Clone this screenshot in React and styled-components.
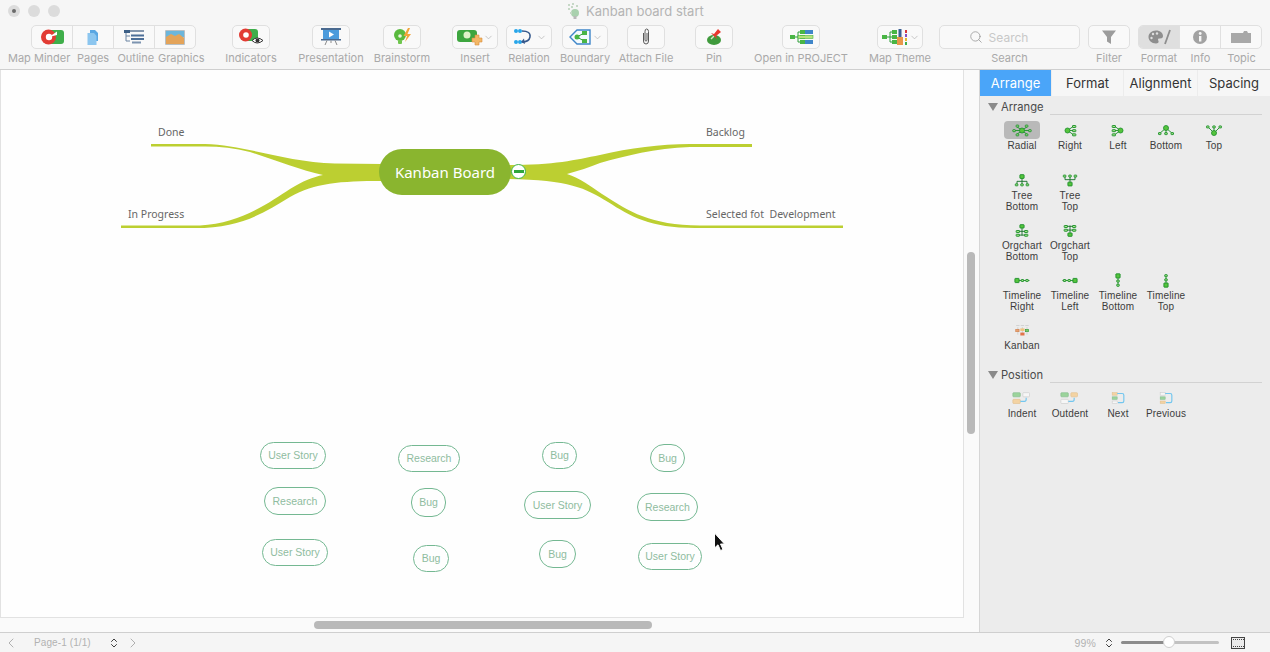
import styled, { createGlobalStyle } from "styled-components";
import { Search, ChevronDown, ChevronLeft, ChevronRight, ChevronsUpDown } from "lucide-react";

const GlobalStyle = createGlobalStyle`
  html, body {
    margin: 0;
    padding: 0;
    overflow: hidden;
  }
  * {
    box-sizing: border-box;
  }
`;

const Window = styled.div`
  width: 1270px;
  height: 652px;
  display: flex;
  flex-direction: column;
  background: #f6f6f6;
  font-family: "Liberation Sans", Arial, sans-serif;
  overflow: hidden;
`;

const TitleBar = styled.div`
  height: 25px;
  flex: none;
  display: flex;
  align-items: center;
  padding: 0 0 3px 8px;
  gap: 8px;
`;

const Light = styled.span`
  width: 12px;
  height: 12px;
  border-radius: 50%;
  background: #dcdcdc;
  display: flex;
  align-items: center;
  justify-content: center;
  &::after {
    content: "";
    width: 4px;
    height: 4px;
    border-radius: 50%;
    background: ${(p) => (p.$dot ? "#6a6a6a" : "transparent")};
  }
`;

const TitleText = styled.div`
  margin-left: 499px;
  display: flex;
  align-items: center;
  gap: 5px;
  font-family: Inter, sans-serif;
  font-size: 13px;
  color: #b4b4b4;
`;

const Toolbar = styled.div`
  height: 45px;
  flex: none;
  display: flex;
  padding-left: 8px;
  border-bottom: 1px solid #cfcfcf;
`;

const Tool = styled.div`
  width: ${(p) => p.$w}px;
  margin-left: ${(p) => p.$ml || 0}px;
  display: flex;
  flex-direction: column;
  align-items: center;
`;

const ToolButton = styled.div`
  width: ${(p) => p.$w}px;
  height: 24px;
  border: 1px solid #e0e0e0;
  border-radius: 5px;
  background: #f9f9f9;
  display: flex;
  align-items: center;
  justify-content: center;
  color: #b0b0b0;
`;

const Segments = styled.div`
  display: flex;
  align-self: flex-start;
  width: ${(p) => p.$w}px;
  height: 24px;
  margin-left: ${(p) => p.$ml || 0}px;
  border: 1px solid #e0e0e0;
  border-radius: 5px;
  background: #f9f9f9;
  overflow: hidden;
`;

const Segment = styled.div`
  flex: 1;
  display: flex;
  align-items: center;
  justify-content: center;
  background: ${(p) => (p.$on ? "#dfdfdf" : "transparent")};
  & + & {
    border-left: 1px solid #e0e0e0;
  }
`;

const LabelRow = styled.div`
  display: flex;
  width: 100%;
`;

const ToolLabel = styled.div`
  width: ${(p) => (p.$w ? p.$w + "px" : "auto")};
  margin-left: ${(p) => p.$ml || 0}px;
  margin-top: 3px;
  font-family: Inter, sans-serif;
  font-size: 11px;
  line-height: 13px;
  color: #a9a9a9;
  text-align: center;
  white-space: nowrap;
`;

const SearchBox = styled(ToolButton)`
  width: 141px;
  gap: 6px;
  font-family: Inter, sans-serif;
  font-size: 12px;
  color: #c8c8c8;
  padding-right: 22px;
`;

const Main = styled.div`
  flex: 1;
  display: flex;
  min-height: 0;
`;

const Stage = styled.div`
  width: 980px;
  flex: none;
  display: flex;
  flex-direction: column;
  background: #fafafa;
  border-right: 1px solid #d6d6d6;
`;

const StageRow = styled.div`
  flex: 1;
  display: flex;
  min-height: 0;
`;

const Canvas = styled.div`
  position: relative;
  width: 964px;
  flex: none;
  background: #fefefe;
  border-left: 1px solid #e2e2e2;
  border-right: 1px solid #e2e2e2;
  border-bottom: 1px solid #e2e2e2;
`;

const MapDrawing = styled.svg`
  position: absolute;
  left: -1px;
  top: 0;
`;

const VTrack = styled.div`
  flex: 1;
  padding: 182px 3px 0 3px;
`;

const VThumb = styled.div`
  width: 8px;
  height: 182px;
  border-radius: 4px;
  background: #b9b9b9;
`;

const HTrack = styled.div`
  height: 14px;
  flex: none;
  padding: 3px 0 0 314px;
`;

const HThumb = styled.div`
  width: 338px;
  height: 8px;
  border-radius: 4px;
  background: #b9b9b9;
`;

const RootNode = styled.div`
  position: absolute;
  left: 378px;
  top: 79px;
  width: 132px;
  height: 46px;
  border-radius: 23px;
  background: #8ab52f;
  color: #fff;
  font-family: "Noto Sans", sans-serif;
  font-size: 15px;
  line-height: 47px;
  text-align: center;
`;

const Collapse = styled.div`
  position: absolute;
  left: 510px;
  top: 94px;
  width: 15px;
  height: 15px;
  border-radius: 50%;
  border: 1.5px solid #3fb54a;
  background: #fff;
  display: flex;
  align-items: center;
  justify-content: center;
  &::after {
    content: "";
    width: 10px;
    height: 3px;
    background: #2fa63c;
  }
`;

const BranchLabel = styled.div`
  position: absolute;
  left: ${(p) => p.$x - 1}px;
  top: ${(p) => p.$y}px;
  font-family: "Noto Sans", sans-serif;
  font-size: 10.5px;
  line-height: 14px;
  color: #666;
  white-space: pre;
`;

const Sticky = styled.div`
  position: absolute;
  left: ${(p) => p.$x - 1}px;
  top: ${(p) => p.$y - 70}px;
  width: ${(p) => p.$w}px;
  height: ${(p) => p.$h}px;
  padding-bottom: 1px;
  border: 1px solid #74b892;
  border-radius: 14px;
  display: flex;
  align-items: center;
  justify-content: center;
  font-size: 10.5px;
  color: #8fbc9f;
  white-space: nowrap;
`;

const Cursor = styled.svg`
  position: absolute;
  left: 712px;
  top: 462px;
`;

const Panel = styled.div`
  flex: 1;
  display: flex;
  flex-direction: column;
  background: #ececec;
`;

const Tabs = styled.div`
  height: 26px;
  flex: none;
  display: flex;
  background: #f6f6f6;
`;

const Tab = styled.div`
  width: ${(p) => p.$w}px;
  display: flex;
  align-items: center;
  justify-content: center;
  font-family: Inter, sans-serif;
  font-size: 13px;
  color: ${(p) => (p.$on ? "#fff" : "#333")};
  background: ${(p) => (p.$on ? "#4aa5f9" : "transparent")};
  & + & {
    border-left: 1px solid #ececec;
  }
`;

const Section = styled.section`
  margin-top: ${(p) => p.$mt}px;
  padding: 0 8px;
`;

const SectionHead = styled.div`
  height: 14px;
  display: flex;
  align-items: center;
`;

const SectionTitle = styled.span`
  width: 49px;
  font-family: Inter, sans-serif;
  font-size: 11.2px;
  color: #4a4a4a;
  white-space: nowrap;
`;

const Triangle = styled.span`
  width: 0;
  height: 0;
  border-left: 5px solid transparent;
  border-right: 5px solid transparent;
  border-top: 8px solid #8a8a8a;
  margin-right: 3px;
`;

const HeadRule = styled.span`
  flex: 1;
  height: 1px;
  margin-top: 14px;
  background: #d2d2d2;
`;

const LayoutGrid = styled.div`
  display: grid;
  grid-template-columns: repeat(5, 48px);
  grid-auto-rows: 42px;
  row-gap: 8px;
  margin: 7px 0 0 10px;
`;

const LayoutItem = styled.div`
  display: flex;
  flex-direction: column;
  align-items: center;
  grid-column: ${(p) => p.$col || "auto"};
`;

const LayoutIcon = styled.div`
  width: 36px;
  height: 18px;
  border-radius: 4px;
  background: ${(p) => (p.$on ? "#b9b9b9" : "transparent")};
  display: flex;
  align-items: center;
  justify-content: center;
`;

const LayoutLabel = styled.div`
  margin-top: 1px;
  font-size: 10px;
  line-height: 11px;
  letter-spacing: 0.15px;
  color: #3c3c3c;
  text-align: center;
  white-space: pre-line;
`;

const StatusBar = styled.div`
  height: 20px;
  flex: none;
  display: flex;
  align-items: center;
  border-top: 1px solid #cfcfcf;
  background: #f5f5f5;
  padding-left: 3px;
  color: #b0b0b0;
`;

const PageText = styled.span`
  margin-left: 15px;
  width: 57px;
  font-size: 10px;
  letter-spacing: 0.1px;
  color: #b2b2b2;
  white-space: nowrap;
`;

const Stepper = styled(ChevronsUpDown)`
  color: #3f3f3f;
  margin-left: ${(p) => p.$ml || 0}px;
`;

const NextPage = styled(ChevronRight)`
  margin-left: 5px;
`;

const Zoom = styled.span`
  margin-left: auto;
  font-size: 10.5px;
  letter-spacing: 0.2px;
  color: #b2b2b2;
`;

const Slider = styled.div`
  position: relative;
  width: 98px;
  height: 3px;
  margin-left: 6px;
  border-radius: 2px;
  background: linear-gradient(to right, #8c8c8c 49%, #c2c2c2 49%);
`;

const SliderThumb = styled.span`
  position: absolute;
  left: 42px;
  top: -5px;
  width: 12px;
  height: 12px;
  border-radius: 50%;
  background: #fff;
  border: 1px solid #cfcfcf;
`;

const Film = styled.svg`
  margin: 0 25px 0 12px;
`;

const G = "#1e8f2c";
const L = "#a3e489";

const Box = ({ x, y, w = 3, h = 2.4, fill = L, stroke = G }) => (
  <rect x={x} y={y} width={w} height={h} rx="0.5" fill={fill} stroke={stroke} strokeWidth="1.1" />
);
const Hub = ({ x, y, r = 3 }) => <circle cx={x} cy={y} r={r} fill="#55c43c" stroke={G} strokeWidth="1" />;
const Wire = ({ d, color = G }) => <path d={d} fill="none" stroke={color} strokeWidth="1.1" />;

const layoutIcons = {
  radial: (
    <>
      <Wire d="M6 4.500L18 13.500M6 13.500L18 4.500M3 9H21" />
      <Hub x={12} y={9} />
      <Box x={5} y={2.5} /><Box x={16} y={2.5} /><Box x={1} y={8} /><Box x={20} y={8} /><Box x={5} y={13} /><Box x={16} y={13} />
    </>
  ),
  right: (
    <>
      <Wire d="M9 9L16 4M9 9L16 14M9 9H16" />
      <Hub x={9} y={9} />
      <Box x={15} y={3} w={4} /><Box x={15} y={8} w={4} /><Box x={15} y={13} w={4} />
    </>
  ),
  left: (
    <>
      <Wire d="M15 9L8 4M15 9L8 14M15 9H8" />
      <Hub x={15} y={9} />
      <Box x={5} y={3} w={4} /><Box x={5} y={8} w={4} /><Box x={5} y={13} w={4} />
    </>
  ),
  bottom: (
    <>
      <Wire d="M12 6L5 12M12 6V12M12 6L19 12" />
      <Hub x={12} y={6} />
      <Box x={3} y={11.5} /><Box x={10.5} y={11.5} /><Box x={18} y={11.5} />
    </>
  ),
  top: (
    <>
      <Wire d="M12 12L5 5M12 12V5M12 12L19 5" />
      <Hub x={12} y={12} />
      <Box x={3} y={3.5} /><Box x={10.5} y={3.5} /><Box x={18} y={3.5} />
    </>
  ),
  treeBottom: (
    <>
      <Wire d="M12 6V10M6 14V10H18V14M12 10V14" color="#17702a" />
      <Box x={9.5} y={2} w={5} h={4.5} fill="#55c43c" />
      <Box x={4} y={13} /><Box x={10.5} y={13} /><Box x={17} y={13} />
    </>
  ),
  treeTop: (
    <>
      <Wire d="M12 12V8M6 4V8H18V4M12 8V4" color="#17702a" />
      <Box x={9.5} y={11} w={5} h={4.5} fill="#55c43c" />
      <Box x={4} y={2.5} /><Box x={10.5} y={2.5} /><Box x={17} y={2.5} />
    </>
  ),
  orgBottom: (
    <>
      <Wire d="M12 6V15M7 10H17M7 14.500H17" color="#17702a" />
      <Box x={9.5} y={2} w={5} h={4} fill="#55c43c" />
      <Box x={5} y={9} w={4} /><Box x={15} y={9} w={4} /><Box x={5} y={13.5} w={4} /><Box x={15} y={13.5} w={4} />
    </>
  ),
  orgTop: (
    <>
      <Wire d="M12 3V13M7 4H17M7 8.500H17" color="#17702a" />
      <Box x={9.5} y={12} w={5} h={4} fill="#55c43c" />
      <Box x={5} y={3} w={4} /><Box x={15} y={3} w={4} /><Box x={5} y={7.5} w={4} /><Box x={15} y={7.5} w={4} />
    </>
  ),
  timeRight: (
    <>
      <Wire d="M8 9H21" />
      <Box x={3.5} y={6.5} w={5} h={5} fill="#55c43c" />
      <Box x={11} y={7.8} /><Box x={16.5} y={7.8} />
    </>
  ),
  timeLeft: (
    <>
      <Wire d="M3 9H16" />
      <Box x={15.5} y={6.5} w={5} h={5} fill="#55c43c" />
      <Box x={4} y={7.8} /><Box x={9.5} y={7.8} />
    </>
  ),
  timeBottom: (
    <>
      <Wire d="M12 5V16" />
      <Box x={9.5} y={1} w={5} h={5} fill="#55c43c" />
      <Box x={10.5} y={8.5} /><Box x={10.5} y={13.5} />
    </>
  ),
  timeTop: (
    <>
      <Wire d="M12 2V13" />
      <Box x={9.5} y={12} w={5} h={5} fill="#55c43c" />
      <Box x={10.5} y={2} /><Box x={10.5} y={7} />
    </>
  ),
  kanban: (
    <>
      <Wire d="M5 3H9M10.500 3H14.500M16 3H20M7 5V14M12.500 5V14M18 5V14" color="#cfcfcf" />
      <rect x="4.500" y="7.500" width="4" height="3" fill="#e8a070" stroke="#c9773f" strokeWidth="0.6" />
      <rect x="10" y="6.500" width="5" height="3" fill="#f0c27c" />
      <rect x="10" y="11.500" width="5" height="3.500" fill="#e2744a" />
      <rect x="16" y="7.500" width="4" height="3" fill="#7fc86a" stroke={G} strokeWidth="0.6" />
    </>
  ),
  indent: (
    <>
      <rect x="1" y="2" width="9" height="5" rx="1" fill="#9bd39b" stroke="#7fb98a" strokeWidth="0.7" />
      <rect x="13" y="2" width="8" height="5" rx="1" fill="#f6f6f6" stroke="#c8c8c8" strokeWidth="0.7" />
      <rect x="1" y="10" width="9" height="5" rx="1" fill="#f3d3a3" stroke="#e0bd8a" strokeWidth="0.7" />
      <path d="M10 12.500H15Q17 12.500 17 10V8" fill="none" stroke="#73c6ee" strokeWidth="1.400" />
    </>
  ),
  outdent: (
    <>
      <rect x="1" y="2" width="9" height="5" rx="1" fill="#9bd39b" stroke="#7fb98a" strokeWidth="0.7" />
      <rect x="13" y="2" width="8" height="5" rx="1" fill="#f3d3a3" stroke="#e0bd8a" strokeWidth="0.7" />
      <rect x="1" y="10" width="9" height="5" rx="1" fill="#f6f6f6" stroke="#c8c8c8" strokeWidth="0.7" />
      <path d="M10 12.500H15Q17 12.500 17 10V8" fill="none" stroke="#73c6ee" strokeWidth="1.400" />
    </>
  ),
  next: (
    <>
      <rect x="5" y="2" width="6" height="3" fill="#f3d3a3" stroke="#e0bd8a" strokeWidth="0.6" />
      <rect x="5" y="7" width="6" height="3" fill="#9bd39b" stroke="#7fb98a" strokeWidth="0.6" />
      <rect x="5" y="12" width="6" height="3" fill="#f6f6f6" stroke="#c8c8c8" strokeWidth="0.6" />
      <path d="M11 3H17Q19 3 19 5V12Q19 14 17 14H12" fill="none" stroke="#73c6ee" strokeWidth="1.400" />
    </>
  ),
  previous: (
    <>
      <rect x="5" y="2" width="6" height="3" fill="#f6f6f6" stroke="#c8c8c8" strokeWidth="0.6" />
      <rect x="5" y="7" width="6" height="3" fill="#9bd39b" stroke="#7fb98a" strokeWidth="0.6" />
      <rect x="5" y="12" width="6" height="3" fill="#f3d3a3" stroke="#e0bd8a" strokeWidth="0.6" />
      <path d="M11 3H17Q19 3 19 5V12Q19 14 17 14H12" fill="none" stroke="#73c6ee" strokeWidth="1.400" />
    </>
  ),
};

const layouts = [
  { icon: "radial", label: "Radial", on: true },
  { icon: "right", label: "Right" },
  { icon: "left", label: "Left" },
  { icon: "bottom", label: "Bottom" },
  { icon: "top", label: "Top" },
  { icon: "treeBottom", label: "Tree\nBottom", col: 1 },
  { icon: "treeTop", label: "Tree\nTop" },
  { icon: "orgBottom", label: "Orgchart\nBottom", col: 1 },
  { icon: "orgTop", label: "Orgchart\nTop" },
  { icon: "timeRight", label: "Timeline\nRight", col: 1 },
  { icon: "timeLeft", label: "Timeline\nLeft" },
  { icon: "timeBottom", label: "Timeline\nBottom" },
  { icon: "timeTop", label: "Timeline\nTop" },
  { icon: "kanban", label: "Kanban", col: 1 },
];

const positions = [
  { icon: "indent", label: "Indent" },
  { icon: "outdent", label: "Outdent" },
  { icon: "next", label: "Next" },
  { icon: "previous", label: "Previous" },
];

const stickies = [
  { text: "User Story", x: 260, y: 442, w: 66, h: 27 },
  { text: "Research", x: 398, y: 445, w: 62, h: 27 },
  { text: "Bug", x: 542, y: 442, w: 35, h: 27 },
  { text: "Bug", x: 650, y: 444, w: 35, h: 28 },
  { text: "Research", x: 264, y: 487, w: 62, h: 28 },
  { text: "Bug", x: 411, y: 488, w: 35, h: 29 },
  { text: "User Story", x: 524, y: 491, w: 67, h: 28 },
  { text: "Research", x: 637, y: 493, w: 61, h: 28 },
  { text: "User Story", x: 262, y: 539, w: 66, h: 27 },
  { text: "Bug", x: 413, y: 545, w: 36, h: 27 },
  { text: "Bug", x: 539, y: 540, w: 37, h: 28 },
  { text: "User Story", x: 638, y: 543, w: 64, h: 27 },
];

const Ico = ({ w = 28, h = 18, children }) => (
  <svg width={w} height={h} viewBox={`0 0 ${w} ${h}`}>
    {children}
  </svg>
);

// the panel icons are drawn on a 24x18 grid and shown a bit smaller
const LayoutGlyph = ({ name }) => (
  <svg width="20" height="15" viewBox="0 0 24 18">
    {layoutIcons[name]}
  </svg>
);

const MinderMark = () => (
  <>
    <rect x="6" y="2" width="18" height="14" rx="3" fill="#3fae4a" />
    <circle cx="8.500" cy="9" r="7.500" fill="#e23c34" />
    <circle cx="9" cy="9" r="3.200" fill="#fff" />
    <path d="M9 9L17 3.500L17 7Z" fill="#fff" />
  </>
);

const MiniTree = () => (
  <>
    <path d="M6 9H10M10 4V14M10 4H13M10 9H13M10 14H13" stroke="#2f9e3a" strokeWidth="1" fill="none" />
    <rect x="2" y="7" width="5" height="4" fill="#49b545" />
    <rect x="12" y="2" width="5" height="4" fill="#49b545" />
    <rect x="12" y="7" width="5" height="4" fill="#49b545" />
    <rect x="12" y="12" width="5" height="4" fill="#49b545" />
  </>
);

export default function App() {
  return (
    <Window>
      <GlobalStyle />
      <TitleBar>
        <Light $dot />
        <Light />
        <Light />
        <TitleText>
          <svg width="14" height="16" viewBox="0 0 14 16">
            <circle cx="8" cy="10" r="4" fill="#a9d1ae" />
            <rect x="6.500" y="13" width="3" height="3" fill="#b9b9b9" />
            <g fill="#c6d8c6">
              <rect x="1" y="1" width="2" height="2" /><rect x="5" y="0" width="2" height="2" />
              <rect x="1" y="5" width="2" height="2" /><rect x="4" y="3" width="2" height="2" />
              <rect x="9" y="2" width="2" height="2" /><rect x="3" y="9" width="2" height="2" />
            </g>
          </svg>
          Kanban board start
        </TitleText>
      </TitleBar>

      <Toolbar>
        <Tool $w={197}>
          <Segments $w={165} $ml={23}>
            <Segment><Ico w={25}><MinderMark /></Ico></Segment>
            <Segment>
              <Ico w={14} h={17}>
                <path d="M4 1H9L12 4V12H4Z" fill="#5aa7e2" />
                <path d="M1.500 4H8L10.500 7V16H1.500Z" fill="#8cc6ef" />
              </Ico>
            </Segment>
            <Segment>
              <Ico w={20} h={16}>
                <rect x="0" y="1" width="6" height="3" fill="#3c5f86" />
                <rect x="6" y="1" width="14" height="2" fill="#8597ae" />
                <path d="M2 4V12H6M2 7H6" stroke="#6a84a2" fill="none" />
                <rect x="7" y="5.500" width="13" height="2" fill="#4d6f98" />
                <rect x="7" y="9" width="13" height="2" fill="#4d6f98" />
                <rect x="8" y="12.500" width="9" height="2" fill="#7d94b0" />
              </Ico>
            </Segment>
            <Segment>
              <Ico w={20} h={15}>
                <rect x="0" y="0" width="20" height="15" rx="1" fill="#b9c0c4" />
                <rect x="1" y="1" width="18" height="6" fill="#6cb6dc" />
                <path d="M1 14V7L6 4L10 6L14 4L19 8V14Z" fill="#e4a45a" />
              </Ico>
            </Segment>
          </Segments>
          <LabelRow>
            <ToolLabel $w={62}>Map Minder</ToolLabel>
            <ToolLabel $w={31} $ml={7}>Pages</ToolLabel>
            <ToolLabel $w={38} $ml={9}>Outline</ToolLabel>
            <ToolLabel $w={48} $ml={3}>Graphics</ToolLabel>
          </LabelRow>
        </Tool>

        <Tool $w={52} $ml={20}>
          <ToolButton $w={38}>
            <Ico w={26} h={18}>
              <rect x="7" y="1" width="13" height="12" rx="3" fill="#3fae4a" />
              <circle cx="7.500" cy="7" r="6.500" fill="#e23c34" />
              <circle cx="8" cy="7" r="2.800" fill="#fff" />
              <path d="M14 12.500Q19 7.500 25 12.500Q19 17.500 14 12.500Z" fill="#fff" stroke="#333" />
              <circle cx="19.500" cy="12.500" r="2" fill="#333" />
            </Ico>
          </ToolButton>
          <ToolLabel>Indicators</ToolLabel>
        </Tool>

        <Tool $w={66} $ml={21}>
          <ToolButton $w={38}>
            <Ico w={20} h={18}>
              <rect x="0" y="0" width="20" height="2" fill="#4a6a90" />
              <rect x="2" y="2" width="16" height="9" fill="#4b9bdc" />
              <path d="M8 3.500L13 6.500L8 9.500Z" fill="#fff" />
              <rect x="0" y="11" width="20" height="1.500" fill="#4a6a90" />
              <path d="M6 12.500L4 17M14 12.500L16 17M10 12.500V15" stroke="#8a8a8a" />
            </Ico>
          </ToolButton>
          <ToolLabel>Presentation</ToolLabel>
        </Tool>

        <Tool $w={58} $ml={9}>
          <ToolButton $w={38}>
            <Ico w={20} h={18}>
              <circle cx="8" cy="7" r="6" fill="#59ba3e" />
              <rect x="6" y="12" width="4" height="4" rx="1" fill="#6fc64d" />
              <circle cx="8" cy="8" r="1.800" fill="#e9f6df" />
              <path d="M16 0L11.500 8H15L13 14L19 6H15.500L18 0Z" fill="#f0a53a" />
            </Ico>
          </ToolButton>
          <ToolLabel>Brainstorm</ToolLabel>
        </Tool>

        <Tool $w={46} $ml={21}>
          <ToolButton $w={46}>
            <Ico w={26} h={18}>
              <rect x="0" y="2" width="20" height="12" rx="3" fill="#3da63f" />
              <circle cx="10" cy="7" r="3.500" fill="#dff3c9" />
              <path d="M18 7H22V10H25V14H22V17H18V14H15V10H18Z" fill="#f3b766" stroke="#d98d3e" strokeWidth="0.6" />
            </Ico>
            <ChevronDown size={11} strokeWidth={1.500} />
          </ToolButton>
          <ToolLabel>Insert</ToolLabel>
        </Tool>

        <Tool $w={46} $ml={8}>
          <ToolButton $w={46}>
            <Ico w={24} h={18}>
              <circle cx="4" cy="3" r="2" fill="#27a6ea" />
              <circle cx="8" cy="3" r="2" fill="#27a6ea" />
              <circle cx="4" cy="14" r="2" fill="#27a6ea" />
              <circle cx="8" cy="14" r="2" fill="#27a6ea" />
              <path d="M10 3Q19 3 18 9Q17 14 10 14" fill="none" stroke="#35588c" strokeWidth="1.500" />
              <path d="M12 10.500L9 14L13 16Z" fill="#35588c" />
            </Ico>
            <ChevronDown size={11} strokeWidth={1.500} />
          </ToolButton>
          <ToolLabel>Relation</ToolLabel>
        </Tool>

        <Tool $w={46} $ml={10}>
          <ToolButton $w={46}>
            <Ico w={24} h={18}>
              <path d="M2 9L9 2H22V16H9Z" fill="#f4fafe" stroke="#3f86c9" strokeWidth="1.400" />
              <path d="M9 9L16 5M9 9L16 13" stroke="#2f9e3a" />
              <circle cx="9" cy="9" r="2.500" fill="#49b545" />
              <rect x="14" y="3" width="5" height="4" fill="#49b545" />
              <rect x="14" y="11" width="5" height="4" fill="#49b545" />
            </Ico>
            <ChevronDown size={11} strokeWidth={1.500} />
          </ToolButton>
          <ToolLabel>Boundary</ToolLabel>
        </Tool>

        <Tool $w={58} $ml={9}>
          <ToolButton $w={38}>
            <Ico w={12} h={18}>
              <path
                d="M3.500 5V13Q3.500 16 6 16Q8.500 16 8.500 13V3.500Q8.500 1 6.500 1Q5 1 5 3.500V12Q5 13 6 13Q7 13 7 12V5"
                fill="none"
                stroke="#5a5a5a"
                strokeWidth="1"
              />
            </Ico>
          </ToolButton>
          <ToolLabel>Attach File</ToolLabel>
        </Tool>

        <Tool $w={38} $ml={20}>
          <ToolButton $w={38}>
            <Ico w={16} h={18}>
              <ellipse cx="8" cy="12" rx="7" ry="5" fill="#3f9a3c" />
              <path d="M5 11L8 8" stroke="#d4e8c8" strokeWidth="1.500" />
              <path d="M8 6L12 1L15 4L10 8L11 11L5 5Z" fill="#e8372f" />
            </Ico>
          </ToolButton>
          <ToolLabel>Pin</ToolLabel>
        </Tool>

        <Tool $w={94} $ml={21}>
          <ToolButton $w={38}>
            <Ico w={26} h={18}>
              <MiniTree />
              <rect x="17" y="2" width="8" height="4" fill="#3f86c9" />
              <rect x="10" y="7.500" width="15" height="3" fill="#b5e27a" stroke="#49b545" strokeWidth="0.6" />
              <rect x="17" y="12" width="8" height="4" fill="#3f86c9" />
            </Ico>
          </ToolButton>
          <ToolLabel>Open in PROJECT</ToolLabel>
        </Tool>

        <Tool $w={62} $ml={21}>
          <ToolButton $w={46}>
            <Ico w={29} h={18}>
              <MiniTree />
              <rect x="17" y="9" width="6" height="8" fill="#e8974a" />
              <rect x="18.500" y="1" width="3" height="8" fill="#3b5f93" />
              <rect x="25" y="2" width="2" height="3" fill="#d8383a" />
              <rect x="25" y="6" width="2" height="3" fill="#8a4fc0" />
              <rect x="25" y="10" width="2" height="3" fill="#e5b72f" />
              <rect x="25" y="14" width="2" height="3" fill="#3fae4a" />
            </Ico>
            <ChevronDown size={11} strokeWidth={1.500} />
          </ToolButton>
          <ToolLabel>Map Theme</ToolLabel>
        </Tool>

        <Tool $w={141} $ml={8}>
          <SearchBox>
            <Search size={14} strokeWidth={1.400} color="#9a9a9a" />
            Search
          </SearchBox>
          <ToolLabel>Search</ToolLabel>
        </Tool>

        <Tool $w={42} $ml={8}>
          <ToolButton $w={42}>
            <Ico w={16} h={16}>
              <path d="M1 1.500H15L10 8V15L6 12.500V8Z" fill="#9c9c9c" />
            </Ico>
          </ToolButton>
          <ToolLabel>Filter</ToolLabel>
        </Tool>

        <Tool $w={124} $ml={8}>
          <Segments $w={124}>
            <Segment $on>
              <Ico w={24} h={16}>
                <path
                  d="M9 1.500C13.500 1.500 16 4 16 7C16 9.500 13.500 9.500 12 9.500C10.500 9.500 11 11 11.500 12C12 13.500 11 14.500 9 14.500C4.500 14.500 1.500 11.500 1.500 8C1.500 4.500 4.500 1.500 9 1.500Z"
                  fill="#8e8e8e"
                />
                <circle cx="6" cy="5" r="1.200" fill="#dfdfdf" />
                <circle cx="10" cy="4.500" r="1.200" fill="#dfdfdf" />
                <circle cx="4.500" cy="9" r="1.200" fill="#dfdfdf" />
                <path d="M18 15L23 1" stroke="#8e8e8e" strokeWidth="1.800" />
              </Ico>
            </Segment>
            <Segment>
              <Ico w={16} h={16}>
                <circle cx="8" cy="8" r="7" fill="#a2a2a2" />
                <rect x="7" y="7" width="2.400" height="5.500" fill="#f6f6f6" />
                <circle cx="8.200" cy="4.500" r="1.400" fill="#f6f6f6" />
              </Ico>
            </Segment>
            <Segment>
              <Ico w={20} h={14}>
                <path d="M0 3H12L13 1H16L17 3H20V13H0Z" fill="#a8a8a8" />
              </Ico>
            </Segment>
          </Segments>
          <LabelRow>
            <ToolLabel $w={42}>Format</ToolLabel>
            <ToolLabel $w={41}>Info</ToolLabel>
            <ToolLabel $w={41}>Topic</ToolLabel>
          </LabelRow>
        </Tool>
      </Toolbar>

      <Main>
        <Stage>
          <StageRow>
            <Canvas>
              <MapDrawing width="964" height="300" viewBox="0 70 964 300">
                <path
                  d="M151 144H205C245 145 285 162 335 163.500L382 164V181C340 181 315 183 290 197C262 214 240 228 195 228H121V225.500H200C240 224 270 202 290 189C303 181 313 177 323 175C300 170 275 160 250 152C235 148 220 146.500 205 146.500H151Z"
                  fill="#bccf31"
                />
                <path
                  d="M508 165C555 165 575 160 600 155C630 148 660 144 690 144H752V147H690C655 148 625 156 600 163C590 167 578 171 567 174C580 178 590 186 602 194C630 212 650 225 700 225.500H843V228H695C650 228 630 216 608 202C585 188 570 180 508 179Z"
                  fill="#bccf31"
                />
              </MapDrawing>
              <BranchLabel $x={158} $y={55}>Done</BranchLabel>
              <BranchLabel $x={128} $y={137}>In Progress</BranchLabel>
              <BranchLabel $x={706} $y={55}>Backlog</BranchLabel>
              <BranchLabel $x={706} $y={137}>Selected fot  Development</BranchLabel>
              <RootNode>Kanban Board</RootNode>
              <Collapse />
              {stickies.map((s) => (
                <Sticky key={`${s.x}-${s.y}`} $x={s.x} $y={s.y} $w={s.w} $h={s.h}>
                  {s.text}
                </Sticky>
              ))}
              <Cursor width="12" height="20" viewBox="0 0 12 20">
                <path d="M1.500 1V16L5 12.800L7.500 18.500L10 17.500L7.500 12H11.500Z" fill="#111" stroke="#fff" strokeWidth="1" />
              </Cursor>
            </Canvas>
            <VTrack>
              <VThumb />
            </VTrack>
          </StageRow>
          <HTrack>
            <HThumb />
          </HTrack>
        </Stage>

        <Panel>
          <Tabs>
            <Tab $w={71} $on>Arrange</Tab>
            <Tab $w={72}>Format</Tab>
            <Tab $w={74}>Alignment</Tab>
            <Tab $w={73}>Spacing</Tab>
          </Tabs>

          <Section $mt={4}>
            <SectionHead>
              <Triangle />
              <SectionTitle>Arrange</SectionTitle>
              <HeadRule />
            </SectionHead>
            <LayoutGrid>
              {layouts.map((item) => (
                <LayoutItem key={item.icon} $col={item.col}>
                  <LayoutIcon $on={item.on}>
                    <LayoutGlyph name={item.icon} />
                  </LayoutIcon>
                  <LayoutLabel>{item.label}</LayoutLabel>
                </LayoutItem>
              ))}
            </LayoutGrid>
          </Section>

          <Section $mt={5}>
            <SectionHead>
              <Triangle />
              <SectionTitle>Position</SectionTitle>
              <HeadRule />
            </SectionHead>
            <LayoutGrid>
              {positions.map((item) => (
                <LayoutItem key={item.icon}>
                  <LayoutIcon>
                    <LayoutGlyph name={item.icon} />
                  </LayoutIcon>
                  <LayoutLabel>{item.label}</LayoutLabel>
                </LayoutItem>
              ))}
            </LayoutGrid>
          </Section>
        </Panel>
      </Main>

      <StatusBar>
        <ChevronLeft size={16} strokeWidth={1.500} />
        <PageText>Page-1 (1/1)</PageText>
        <Stepper size={12} strokeWidth={2} $ml={17} />
        <NextPage size={16} strokeWidth={1.500} />
        <Zoom>99%</Zoom>
        <Stepper size={12} strokeWidth={2} $ml={7} />
        <Slider>
          <SliderThumb />
        </Slider>
        <Film width="14" height="12" viewBox="0 0 14 12">
          <rect x="0.500" y="0.500" width="13" height="11" fill="#ececec" stroke="#444" />
          <path d="M0 2.500H14M0 9.500H14" stroke="#444" strokeDasharray="1 1" />
        </Film>
      </StatusBar>
    </Window>
  );
}
